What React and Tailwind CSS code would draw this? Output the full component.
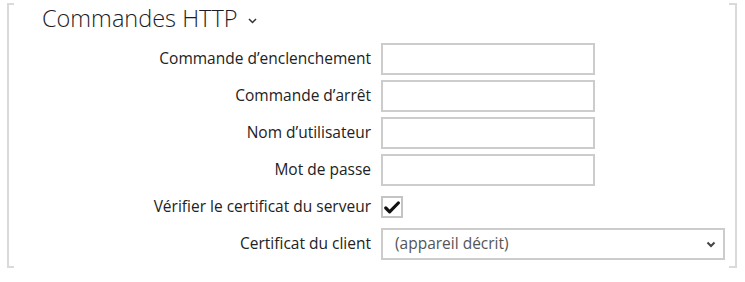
import { useState } from "react";

const rows = [
  { label: "Commande d’enclenchement", type: "text" },
  { label: "Commande d’arrêt", type: "text" },
  { label: "Nom d’utilisateur", type: "text" },
  { label: "Mot de passe", type: "password" },
];

const App = () => {
  const [checked, setChecked] = useState(true);

  return (
    <div
      className="w-[745px] h-[282px] bg-white pt-[13px] pl-[7px] pr-[8px] text-[#222]"
      style={{ fontFamily: '"Open Sans", "Noto Sans", sans-serif' }}
    >
      <div className="relative h-[265px] border-x-2 border-[#dadada]">
        {/* bracket ticks */}
        <div className="absolute -left-[2px] top-0 w-[7px] h-[2px] bg-[#dadada]" />
        <div className="absolute -left-[2px] bottom-0 w-[7px] h-[2px] bg-[#dadada]" />
        <div className="absolute -right-[2px] top-0 w-[8px] h-[2px] bg-[#dadada]" />
        <div className="absolute -right-[2px] bottom-0 w-[8px] h-[2px] bg-[#dadada]" />

        {/* Title */}
        <div className="flex items-center gap-[11px] -mt-[10px] ml-[33px] h-[32px]">
          <span className="text-[23.5px] font-light text-[#1c1c28]">Commandes HTTP</span>
          <svg width="9" height="6" viewBox="0 0 9 6" className="mt-[4px]">
            <path d="M1 1l3.5 3.5L8 1" fill="none" stroke="#333" strokeWidth="1.5" />
          </svg>
        </div>

        {/* Form */}
        <div className="grid grid-cols-[362px_1fr] gap-x-[10px] gap-y-[5px] mt-[8px] text-[15.5px]">
          {rows.map((r) => (
            <div key={r.label} className="contents">
              <label className="h-[32px] flex items-center justify-end">{r.label}</label>
              <input
                type={r.type}
                className="w-[214px] h-[32px] border-2 border-[#cccccc] bg-white outline-none px-2"
              />
            </div>
          ))}

          <label className="h-[32px] flex items-center justify-end">Vérifier le certificat du serveur</label>
          <div className="h-[32px] flex items-center">
            <button
              onClick={() => setChecked(!checked)}
              className="w-[22px] h-[22px] border-2 border-[#c4c4c4] bg-white flex items-center justify-center"
            >
              {checked && (
                <svg width="16" height="13" viewBox="0 0 16 13">
                  <path d="M1.8 7l3.8 3.8L14.3 2" fill="none" stroke="#111" strokeWidth="3.2" strokeLinecap="round" strokeLinejoin="round" />
                </svg>
              )}
            </button>
          </div>

          <label className="h-[32px] flex items-center justify-end">Certificat du client</label>
          <div className="relative w-[344px] h-[32px] border-2 border-[#cccccc] bg-white flex items-center pl-[12px]">
            <span className="text-[#555]">(appareil décrit)</span>
            <svg width="10" height="7" viewBox="0 0 10 7" className="absolute right-[7px] top-[11px]">
              <path d="M1.5 1.5l3.5 3.5 3.5-3.5" fill="none" stroke="#444" strokeWidth="2" />
            </svg>
          </div>
        </div>
      </div>
    </div>
  );
};

export default App;
